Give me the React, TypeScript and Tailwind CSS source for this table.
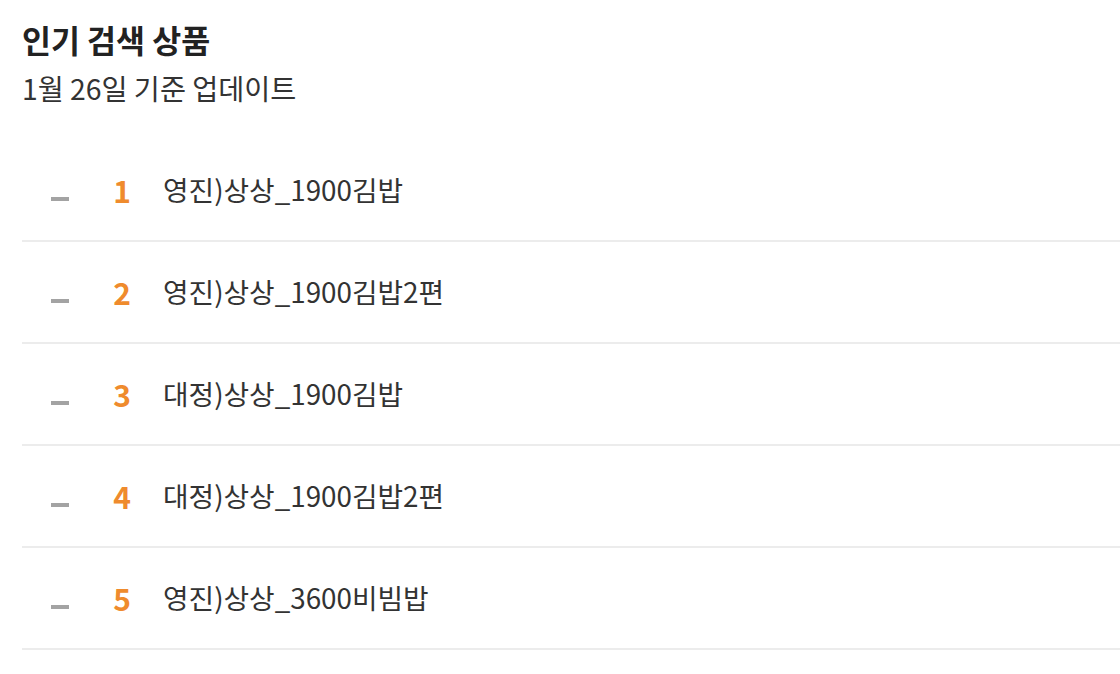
const items = [
  "영진)상상_1900김밥",
  "영진)상상_1900김밥2편",
  "대정)상상_1900김밥",
  "대정)상상_1900김밥2편",
  "영진)상상_3600비빔밥",
];

export default function App() {
  return (
    <div className="min-h-screen bg-white pl-[22px] pt-[18px] font-['Noto_Sans_CJK_KR','Noto_Sans',sans-serif]">
      <h2 className="text-[31.5px] font-bold leading-[42px] text-[#222]">인기 검색 상품</h2>
      <p className="mt-[9px] text-[28.3px] leading-[38px] text-[#333]">1월 26일 기준 업데이트</p>
      <ul className="mt-[33px]">
        {items.map((name, i) => (
          <li
            key={name}
            className="flex h-[102px] items-center border-b-2 border-[#ececec]"
          >
            <span className="ml-[29px] mt-[18px] h-[4px] w-[18px] bg-[#a3a3a3]" />
            <span className="ml-[40px] w-[26px] text-center text-[30px] font-bold text-[#ef8b2d]">
              {i + 1}
            </span>
            <span className="ml-[28px] text-[27.8px] text-[#333]">{name}</span>
          </li>
        ))}
      </ul>
    </div>
  );
}
